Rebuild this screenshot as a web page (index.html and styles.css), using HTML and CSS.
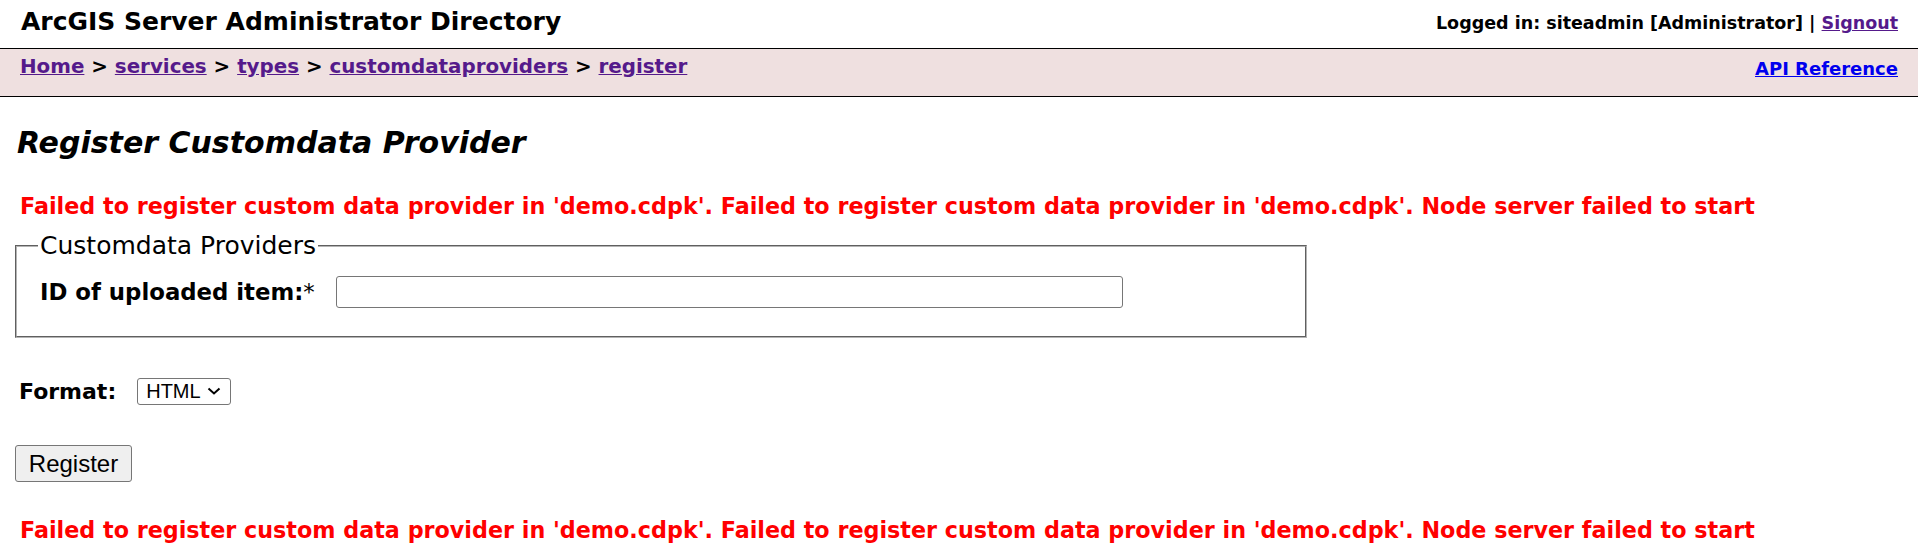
FILE: index.html
```html
<!DOCTYPE html>
<html>
<head>
<meta charset="utf-8">
<title>ArcGIS Server Administrator Directory</title>
<link rel="stylesheet" href="styles.css">
</head>
<body>
<div class="header">
  <div class="title">ArcGIS Server Administrator Directory</div>
  <div class="login">Logged in: siteadmin [Administrator] | <a class="visited" href="#">Signout</a></div>
</div>
<div class="navbar">
  <div class="crumbs"><a class="visited" href="#">Home</a> &gt; <a class="visited" href="#">services</a> &gt; <a class="visited" href="#">types</a> &gt; <a class="visited" href="#">customdataproviders</a> &gt; <a class="visited" href="#">register</a></div>
  <a class="api" href="#">API Reference</a>
</div>
<div class="content">
  <h2 class="page-title">Register Customdata Provider</h2>
  <div class="error first">Failed to register custom data provider in 'demo.cdpk'. Failed to register custom data provider in 'demo.cdpk'. Node server failed to start</div>
  <form class="form">
    <fieldset class="group">
      <legend class="legend">Customdata Providers</legend>
      <div class="row">
        <label class="label id-label">ID of uploaded item:<span class="req">*</span></label>
        <input class="text-input" type="text">
      </div>
    </fieldset>
    <div class="format-row">
      <label class="label">Format:</label>
      <span class="select-wrap">
        <select class="select"><option>HTML</option></select>
        <svg class="chevron" width="14" height="8" viewBox="0 0 14 8"><path d="M1.5 1.5 L7 6.5 L12.5 1.5" fill="none" stroke="#000" stroke-width="2"/></svg>
      </span>
    </div>
    <button class="btn" type="button">Register</button>
  </form>
  <div class="error last">Failed to register custom data provider in 'demo.cdpk'. Failed to register custom data provider in 'demo.cdpk'. Node server failed to start</div>
</div>
</body>
</html>
```

FILE: styles.css
```css
html, body {
  margin: 0;
  padding: 0;
  background: #ffffff;
}
body {
  font-family: "DejaVu Sans", Verdana, sans-serif;
  color: #000;
  width: 1918px;
  height: 557px;
  overflow: hidden;
}
a { color: #0000ee; }
a.visited { color: #551a8b; }

.header {
  box-sizing: border-box;
  height: 49px;
  border-bottom: 1px solid #000;
  display: flex;
  justify-content: space-between;
  align-items: flex-start;
  padding: 7px 20px 0 21px;
}
.title {
  font-size: 25px;
  font-weight: bold;
}
.login {
  font-size: 17.5px;
  font-weight: bold;
  padding-top: 6px;
}

.navbar {
  box-sizing: border-box;
  height: 48px;
  background: #efe0e0;
  border-bottom: 1px solid #000;
  display: flex;
  justify-content: space-between;
  align-items: flex-start;
  padding: 6px 20px 0 20px;
}
.crumbs {
  font-size: 19.85px;
  font-weight: bold;
}
.api {
  font-size: 18px;
  font-weight: bold;
  padding-top: 3px;
}

.content {
  padding: 0 15px;
}
.page-title {
  margin: 28px 0 0 2px;
  font-size: 30px;
  font-style: italic;
  font-weight: bold;
}
.error {
  color: #ff0000;
  font-size: 22.27px;
  font-weight: bold;
  margin-left: 5px;
}
.error.first { margin-top: 33px; }
.error.last { margin-top: 35px; }

.form { margin: 0; }
.group {
  box-sizing: border-box;
  width: 1292px;
  margin: 12px 0 0 0;
  padding: 16px 22px 28px 23px;
  border: 2px groove #b4b4b4;
}
.legend {
  font-size: 25px;
  padding: 0 2px;
  margin-left: -2px;
}
.row {
  display: flex;
  align-items: center;
  gap: 21px;
}
.label {
  font-size: 22px;
  font-weight: bold;
}
.id-label { font-size: 22.8px; }
.req { font-weight: normal; }
.text-input {
  box-sizing: border-box;
  width: 787px;
  height: 32px;
  border: 1px solid #767676;
  border-radius: 3px;
  margin: 0;
  font-size: 20px;
}
.format-row {
  display: flex;
  align-items: center;
  gap: 21px;
  margin: 40px 0 0 4px;
}
.select-wrap {
  position: relative;
  display: inline-flex;
}
.select {
  appearance: none;
  -webkit-appearance: none;
  box-sizing: border-box;
  width: 94px;
  height: 27px;
  font-family: "Liberation Sans", Arial, sans-serif;
  font-size: 20px;
  line-height: 25px;
  border: 1px solid #767676;
  border-radius: 3px;
  padding: 0 0 0 8px;
  background: #fff;
  color: #000;
  margin: 0;
}
.chevron {
  position: absolute;
  left: 70px;
  top: 9px;
  pointer-events: none;
}
.btn {
  display: block;
  box-sizing: border-box;
  margin-top: 40px;
  width: 117px;
  height: 37px;
  font-family: "Liberation Sans", Arial, sans-serif;
  font-size: 24px;
  color: #000;
  background: #efefef;
  border: 1px solid #767676;
  border-radius: 3px;
  padding: 0 6px;
}
```
